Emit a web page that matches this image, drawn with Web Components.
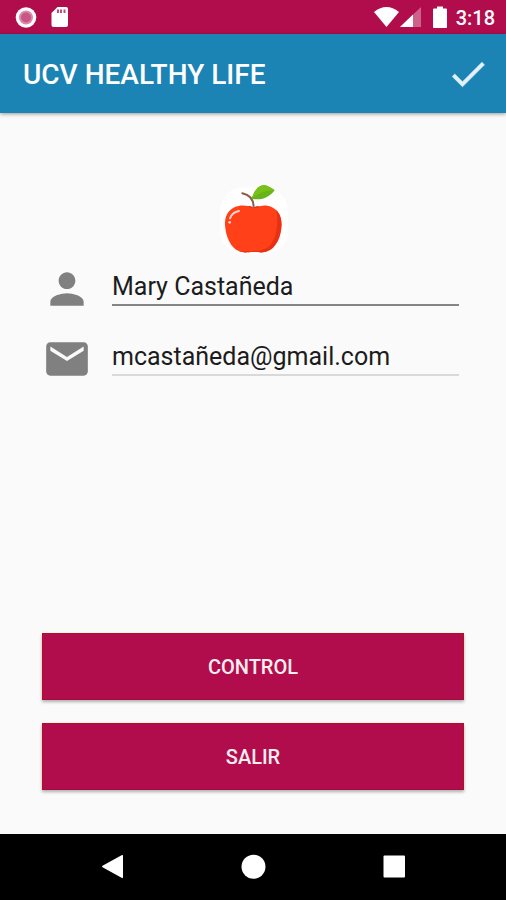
<!DOCTYPE html>
<html lang="es">
<head>
<meta charset="utf-8">
<meta name="viewport" content="width=device-width, initial-scale=1">
<title>UCV Healthy Life</title>
<style>
  html, body { margin: 0; height: 100%; }
  body { font-family: Roboto, "Liberation Sans", sans-serif; background: #fafafa; color: #1c1c1c; }
</style>
</head>
<body>
<app-screen>
  <status-bar slot="status" time="3:18"></status-bar>
  <app-bar slot="bar">UCV HEALTHY LIFE</app-bar>
  <apple-logo></apple-logo>
  <profile-field icon="person" type="text" label="Nombre" value="Mary Castañeda"></profile-field>
  <profile-field icon="mail" type="email" label="Correo" value="mcastañeda@gmail.com"></profile-field>
  <action-button slot="actions">CONTROL</action-button>
  <action-button slot="actions">SALIR</action-button>
  <nav-bar slot="nav"></nav-bar>
</app-screen>

<script>
function define(name, render) {
  customElements.define(name, class extends HTMLElement {
    constructor() {
      super();
      this.attachShadow({ mode: "open" });
    }
    connectedCallback() {
      this.shadowRoot.innerHTML = render(this);
    }
  });
}

define("app-screen", () => `
  <style>
    :host { display: flex; flex-direction: column; min-height: 100vh; }
    main { flex: 1; display: flex; flex-direction: column; padding: 70px 42px 44px; }
    .actions { display: flex; flex-direction: column; gap: 23px; margin-top: auto; }
  </style>
  <slot name="status"></slot>
  <slot name="bar"></slot>
  <main>
    <slot></slot>
    <div class="actions"><slot name="actions"></slot></div>
  </main>
  <slot name="nav"></slot>`);

define("status-bar", el => `
  <style>
    :host { display: flex; justify-content: space-between; align-items: center; height: 34px;
            padding: 0 11px 0 15px; background: #b10d4c; color: #fff; }
    div { display: flex; align-items: center; }
    .left { gap: 14px; }
    svg { display: block; fill: #fff; }
    .battery { margin: 0 9px 0 10px; }
    time { font-size: 20px; line-height: 24px; font-weight: 500; padding-top: 2px; }
  </style>
  <div class="left">
    <svg width="22" height="22" viewBox="0 0 22 22" aria-hidden="true">
      <circle cx="11" cy="11.500" r="10.300"/><circle cx="11" cy="11.500" r="7" fill="#d98aa8"/><circle cx="11" cy="11.500" r="5" fill="#cb5585"/>
    </svg>
    <svg width="18" height="22" viewBox="0 0 18 22" aria-hidden="true">
      <path d="M6.500 1H15q2 0 2 2v16q0 2-2 2H2.500q-2 0-2-2V7z"/>
      <path fill="#b10d4c" opacity=".75" d="M6 3.500h2v3.500H6zM9 3.500h2v3.500H9zM12.500 3.500h2v3.500h-2z"/>
    </svg>
  </div>
  <div>
    <svg width="26" height="22" viewBox="0 0 26 22" aria-hidden="true"><path d="M1 6Q13.500-4 26 6L13.500 21z"/></svg>
    <svg width="24" height="22" viewBox="0 0 24 22" aria-hidden="true">
      <path opacity=".35" d="M22 1v20H1z"/><path d="M14 8.600V21H1z"/>
    </svg>
    <svg class="battery" width="14" height="22" viewBox="0 0 14 22" aria-hidden="true"><path d="M4 .5h6V2.500h3q1 0 1 1v17.500q0 1-1 1H1q-1 0-1-1V3.500q0-1 1-1h3z"/></svg>
    <time>${el.getAttribute("time")}</time>
  </div>`);

define("app-bar", () => `
  <style>
    :host { display: flex; align-items: center; justify-content: space-between; height: 79px;
            padding: 0 16px 0 23px; background: #1b84b5; color: #fff; box-shadow: 0 1px 4px rgba(0,0,0,.4); }
    h1 { margin: 0; padding-top: 2px; font-size: 28px; line-height: 36px; font-weight: 500; }
    button { padding: 0; border: 0; background: none; }
    svg { display: block; width: 44px; height: 44px; fill: #e3f1fc; stroke: #e3f1fc; stroke-width: .3; }
  </style>
  <h1><slot></slot></h1>
  <button type="button" aria-label="Guardar">
    <svg viewBox="0 0 24 24"><path d="M9 16.200L4.800 12l-1.400 1.400L9 19 21 7l-1.400-1.400z"/></svg>
  </button>`);

define("apple-logo", () => `
  <style>
    :host { display: flex; justify-content: center; }
    svg { display: block; width: 72px; height: 72px; }
  </style>
  <svg viewBox="51 39 216 216" role="img" aria-label="Manzana">
    <rect x="60" y="52" width="204" height="200" rx="70" fill="#fefefe"/>
    <path fill="#ff4018" d="M160 113c-14-5-28-8-44-5-28 5-42 27-41 56 2 37 18 71 44 80 14 6 25 2 42 2s27 4 41-2c27-10 42-45 43-80 0-32-16-52-43-57-15-2-28 3-42 6z"/>
    <path fill="#ea3013" d="M228 120c11 10 16 24 16 44-1 35-16 70-43 80-14 6-24 2-41 2s-28 4-42-2l-5-2c32 3 72 4 93-12 24-20 31-74 22-110z"/>
    <path fill="none" stroke="#c22a12" stroke-width="3" stroke-linecap="round" d="M148 110q13 5 27 0"/>
    <path fill="none" stroke="#8a5a4a" stroke-width="6" stroke-linecap="round" d="M127 70c21 4 32 16 34 38"/>
    <path fill="#67b419" d="M155 86c8-26 20-39 37-41 12 2 21 8 32 16-16 21-39 32-69 25z"/>
    <path fill="#78c11a" d="M155 86c20-17 40-24 69-25-9-8-20-14-32-16-17 2-29 15-37 41z"/>
    <path fill="none" stroke="#ffd8cc" stroke-width="6" stroke-linecap="round" d="M90 145c4-12 13-19 27-22"/>
    <circle cx="89" cy="157" r="4" fill="#ffd8cc"/>
  </svg>`);

const ICONS = {
  person: "M12 12c2.210 0 4-1.790 4-4s-1.790-4-4-4-4 1.790-4 4 1.790 4 4 4zm0 2c-2.670 0-8 1.340-8 4v2h16v-2c0-2.660-5.330-4-8-4z",
  mail: "M20 4H4c-1.100 0-1.990.9-1.990 2L2 18c0 1.100.9 2 2 2h16c1.100 0 2-.9 2-2V6c0-1.100-.9-2-2-2zm0 4l-8 5-8-5V6l8 5 8-5v2z"
};

define("profile-field", el => `
  <style>
    :host { display: block; padding: 9px 5px 11px 0; --line: #858585; }
    :host([icon="mail"]) { --line: #d9d9d9; }
    label { display: flex; align-items: center; gap: 20px; }
    svg { flex: none; width: 50px; height: 50px; fill: #808080; }
    input { flex: 1; min-width: 0; height: 34px; box-sizing: border-box; padding: 0 0 3px; border: 0; margin: 0;
            border-bottom: 2px solid var(--line); border-radius: 0; background: none; outline: 0;
            color: inherit; font: 25px/28px Roboto, "Liberation Sans", sans-serif; }
  </style>
  <label>
    <svg viewBox="0 0 24 24" aria-hidden="true"><path d="${ICONS[el.getAttribute("icon")]}"/></svg>
    <input type="text" inputmode="${el.getAttribute("type")}" aria-label="${el.getAttribute("label")}" value="${el.getAttribute("value")}">
  </label>`);

define("action-button", () => `
  <style>
    :host { display: block; }
    button { display: block; width: 100%; height: 67px; padding: 0; border: 1px solid #b30f1f; border-bottom-color: #a50c3c;
             background: #b10d4c; color: #fdeef0; font: 500 20px/24px Roboto, "Liberation Sans", sans-serif;
             box-shadow: 0 2px 3px rgba(0,0,0,.3); }
  </style>
  <button type="button"><slot></slot></button>`);

define("nav-bar", () => `
  <style>
    :host { display: block; background: #000; }
    nav { display: flex; justify-content: center; align-items: center; gap: 100px; height: 66px; }
    button { width: 40px; height: 40px; padding: 0; border: 0; background: none; }
    svg { display: block; width: 40px; height: 40px; fill: #fff; }
  </style>
  <nav aria-label="Sistema">
    <button type="button" aria-label="Atrás"><svg viewBox="0 0 40 40"><path d="M29 8q1-.5 1 1v21q0 1.500-1 1L9.500 20.300q-1-.8 0-1.600z"/></svg></button>
    <button type="button" aria-label="Inicio"><svg viewBox="0 0 40 40"><circle cx="20.500" cy="19.700" r="12"/></svg></button>
    <button type="button" aria-label="Recientes"><svg viewBox="0 0 40 40"><rect x="10.500" y="8.500" width="21.500" height="22" rx="1"/></svg></button>
  </nav>`);
</script>
</body>
</html>
